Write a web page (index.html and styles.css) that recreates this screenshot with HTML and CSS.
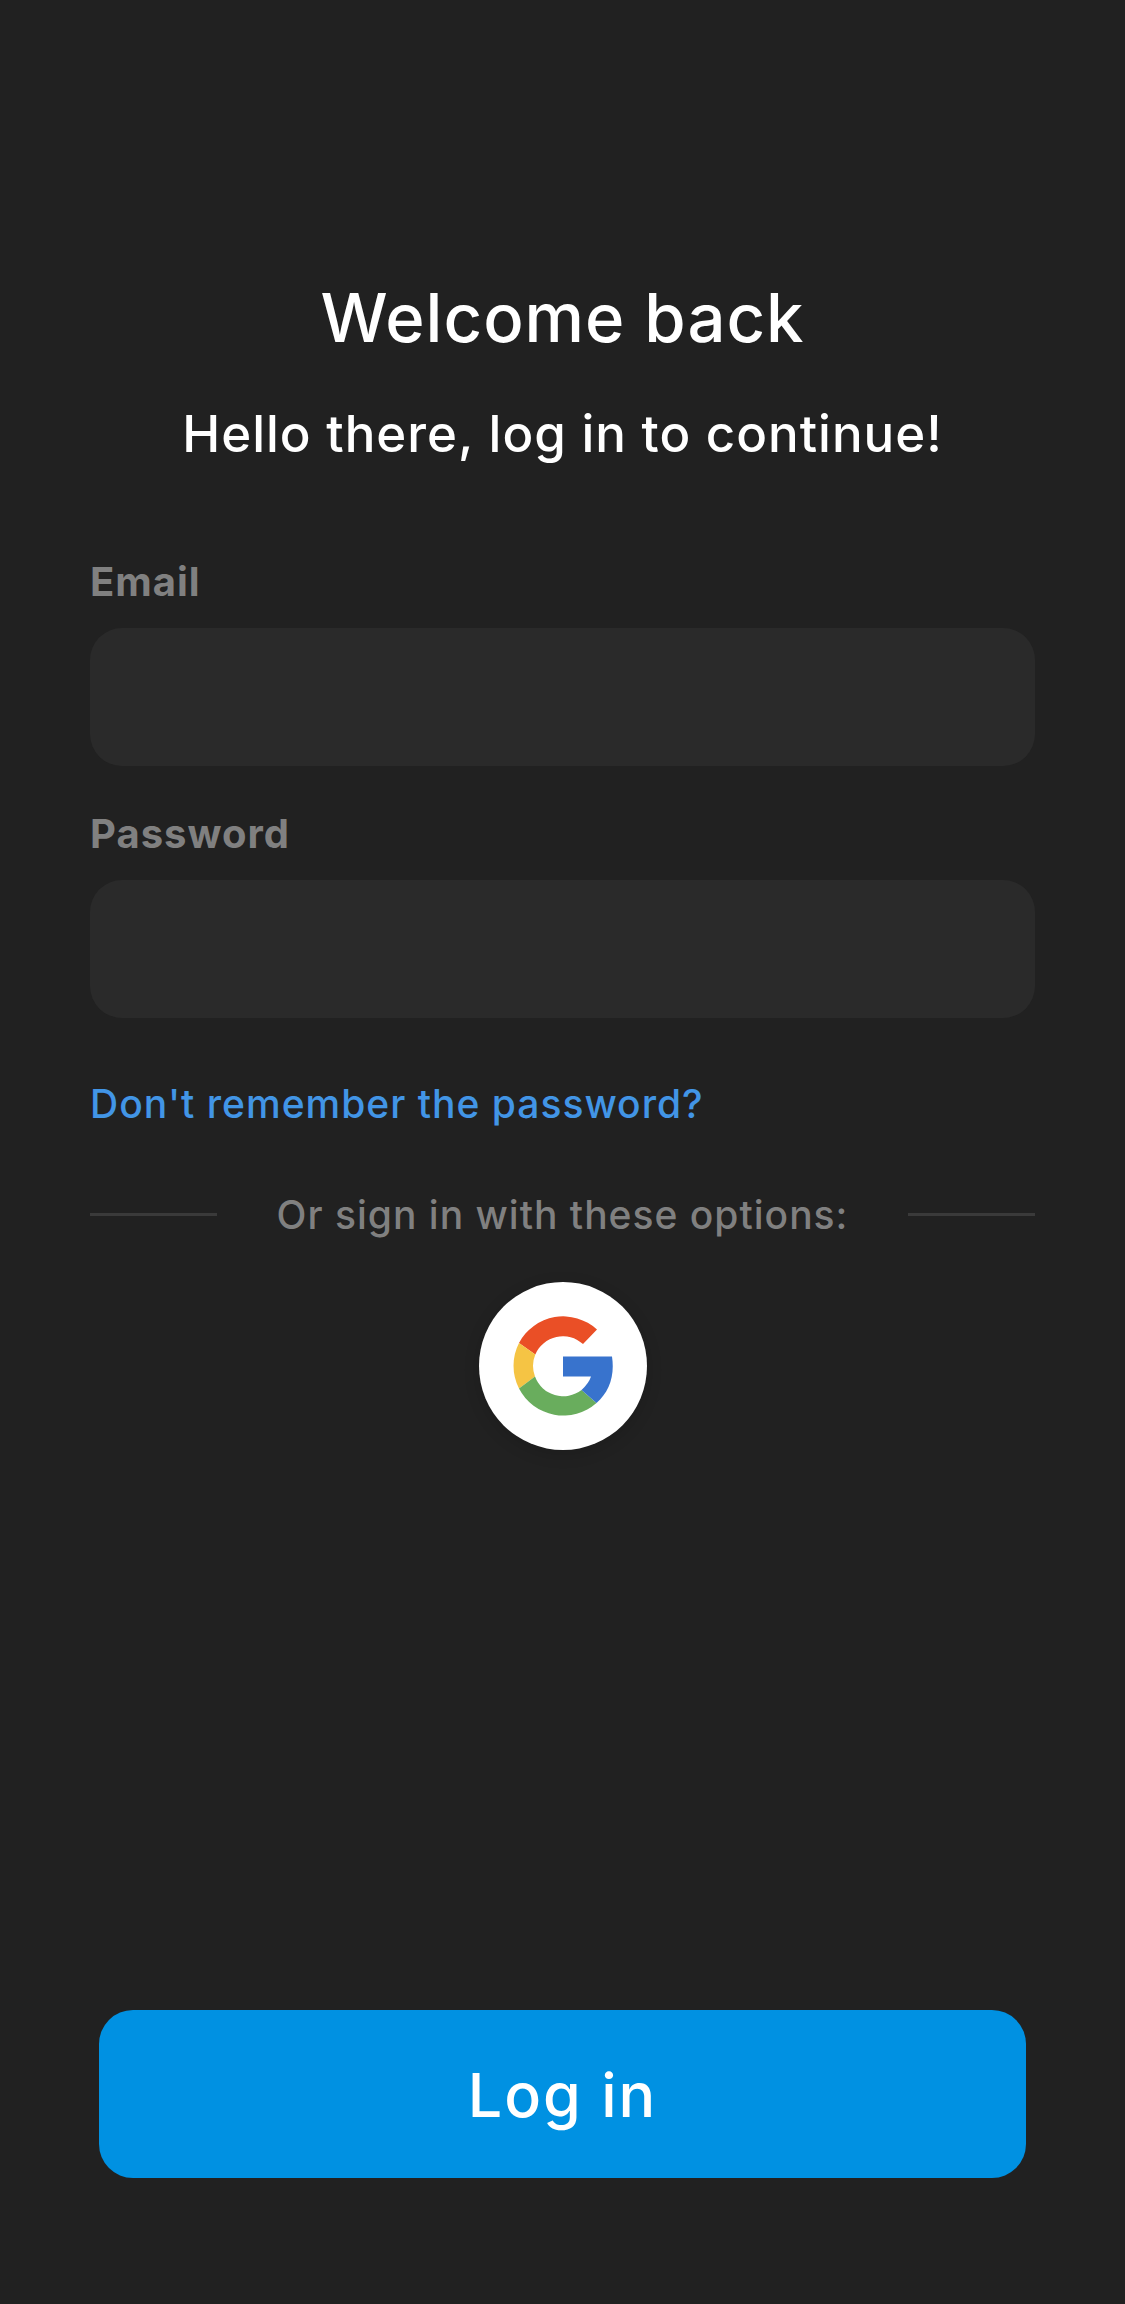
FILE: index.html
```html
<!DOCTYPE html>
<html lang="en">
<head>
<meta charset="utf-8">
<meta name="viewport" content="width=device-width, initial-scale=1">
<title>Log in</title>
<link rel="stylesheet" href="styles.css">
</head>
<body>
<main class="page">
  <header class="intro">
    <h1 class="title">Welcome back</h1>
    <p class="subtitle">Hello there, log in to continue!</p>
  </header>
  <form class="form">
    <div class="field">
      <label class="label" for="email">Email</label>
      <input class="input" id="email" type="email">
    </div>
    <div class="field">
      <label class="label" for="password">Password</label>
      <input class="input" id="password" type="password">
    </div>
    <a class="forgot" href="#">Don't remember the password?</a>
    <div class="divider"><span>Or sign in with these options:</span></div>
    <button class="google" type="button" aria-label="Sign in with Google">
      <svg class="google-icon" viewBox="0 0 100 100" aria-hidden="true">
        <path fill="#ea4f26" d="M6 27A50 50 0 0 1 84 13.500L70 28A30 30 0 0 0 22.300 38.500Z"/>
        <path fill="#f5c444" d="M6 27A50 50 0 0 0 6 72.500L22 60.500A30 30 0 0 1 22.300 38.500Z"/>
        <path fill="#69ad5d" d="M6 72.500A50 50 0 0 0 83.500 87L68.500 74A30 30 0 0 1 22 60.500Z"/>
        <path fill="#3873cd" d="M50 40.500H99C102 60 96 76 83.500 87L68.500 74Q76 67 78 60.500H50Z"/>
      </svg>
    </button>
    <button class="submit" type="submit">Log in</button>
  </form>
</main>
</body>
</html>
```
FILE: styles.css
```css
* { box-sizing: border-box; }
body {
  margin: 0;
  background: #212121;
  color: #fff;
  font-family: Inter, "Liberation Sans", sans-serif;
  letter-spacing: 1px;
}
.page {
  display: flex;
  flex-direction: column;
  min-height: 100vh;
  padding: 276px 90px 126px;
}
.intro { text-align: center; }
.title { margin: 0; font-size: 67px; line-height: 84px; font-weight: 500; }
.subtitle { margin: 42px 0 0; font-size: 51px; line-height: 64px; font-weight: 500; }
.form { display: flex; flex: 1; flex-direction: column; margin-top: 90px; }
.field { display: flex; flex-direction: column; gap: 20px; margin-bottom: 42px; }
.label { color: #808080; font-size: 40px; line-height: 52px; font-weight: 700; }
.input {
  width: 100%;
  height: 138px;
  padding: 0 32px;
  border: 0;
  border-radius: 32px;
  background: #2a2a2a;
  color: #fff;
  font: inherit;
  font-size: 40px;
}
.forgot {
  align-self: flex-start;
  margin-top: 18px;
  color: #4295e6;
  font-size: 39px;
  line-height: 52px;
  font-weight: 500;
  text-decoration: none;
}
.divider {
  display: flex;
  align-items: center;
  gap: 60px;
  margin-top: 59px;
  color: #808080;
  font-size: 39px;
  line-height: 51px;
  font-weight: 500;
}
.divider::before,
.divider::after {
  content: "";
  flex: 1;
  height: 3px;
  background: #3a3a3a;
}
.google {
  display: grid;
  place-items: center;
  align-self: center;
  width: 168px;
  height: 168px;
  margin-top: 42px;
  padding: 0;
  border: 0;
  border-radius: 50%;
  background: #fff;
  box-shadow: 0 4px 16px rgba(0, 0, 0, 0.15);
}
.google-icon { width: 100px; height: 100px; }
.submit {
  margin: auto 9px 0;
  height: 168px;
  padding: 2px 0 0;
  border: 0;
  border-radius: 34px;
  background: #0091e2;
  color: #fff;
  font: inherit;
  font-size: 61px;
  font-weight: 500;
  letter-spacing: 2px;
}
```
